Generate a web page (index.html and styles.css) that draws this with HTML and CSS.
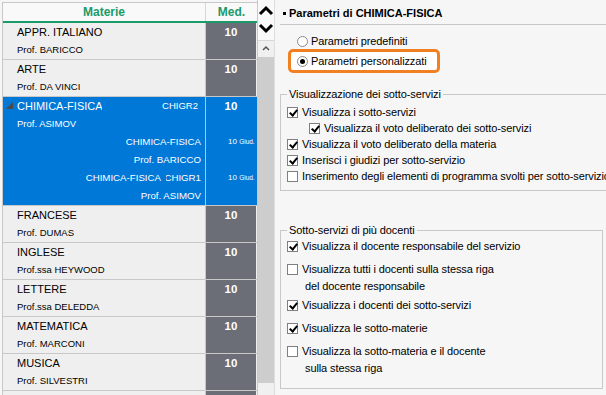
FILE: index.html
```html
<!DOCTYPE html>
<html lang="it">
<head>
    <meta charset="UTF-8">
    <meta name="viewport" content="width=device-width, initial-scale=1.0">
    <title>Parametri di CHIMICA-FISICA</title>
    <link rel="stylesheet" href="styles.css">
</head>
<body>

<div class="app">

    <!-- Elenco delle materie -->
    <div class="list">
        <div class="list-head">
            <div class="head-name">Materie</div>
            <div class="head-med">Med.</div>
        </div>

        <div class="row">
            <div class="cell-name">
                <div class="subj">APPR. ITALIANO</div>
                <div class="prof">Prof. BARICCO</div>
            </div>
            <div class="cell-med"><div class="grade">10</div></div>
        </div>

        <div class="row">
            <div class="cell-name">
                <div class="subj">ARTE</div>
                <div class="prof">Prof. DA VINCI</div>
            </div>
            <div class="cell-med"><div class="grade">10</div></div>
        </div>

        <div class="row selected">
            <div class="cell-name">
                <div class="subj subj-main">
                    <svg class="tri" width="7" height="7" viewBox="0 0 7 7"><polygon points="7,0 7,7 0,7" fill="#4a4a4a"/></svg>
                    <span class="subj-clip">CHIMICA-FISICA</span>
                    <span class="code">CHIGR2</span>
                </div>
                <div class="prof">Prof. ASIMOV</div>
                <div class="sub">CHIMICA-FISICA</div>
                <div class="sub">Prof. BARICCO</div>
                <div class="sub">CHIMICA-FISICA <span class="code-clip"><span>CHIGR1</span></span></div>
                <div class="sub">Prof. ASIMOV</div>
            </div>
            <div class="cell-med">
                <div class="grade">10</div>
                <div class="grade"></div>
                <div class="grade-sub">10 <small>Giud.</small></div>
                <div class="grade"></div>
                <div class="grade-sub">10 <small>Giud.</small></div>
                <div class="grade"></div>
            </div>
        </div>

        <div class="row">
            <div class="cell-name">
                <div class="subj">FRANCESE</div>
                <div class="prof">Prof. DUMAS</div>
            </div>
            <div class="cell-med"><div class="grade">10</div></div>
        </div>

        <div class="row">
            <div class="cell-name">
                <div class="subj">INGLESE</div>
                <div class="prof">Prof.ssa HEYWOOD</div>
            </div>
            <div class="cell-med"><div class="grade">10</div></div>
        </div>

        <div class="row">
            <div class="cell-name">
                <div class="subj">LETTERE</div>
                <div class="prof">Prof.ssa DELEDDA</div>
            </div>
            <div class="cell-med"><div class="grade">10</div></div>
        </div>

        <div class="row">
            <div class="cell-name">
                <div class="subj">MATEMATICA</div>
                <div class="prof">Prof. MARCONI</div>
            </div>
            <div class="cell-med"><div class="grade">10</div></div>
        </div>

        <div class="row">
            <div class="cell-name">
                <div class="subj">MUSICA</div>
                <div class="prof">Prof. SILVESTRI</div>
            </div>
            <div class="cell-med"><div class="grade">10</div></div>
        </div>

        <!-- riga successiva, appena visibile -->
        <div class="row">
            <div class="cell-name"></div>
            <div class="cell-med"></div>
        </div>
    </div>

    <!-- Barra di scorrimento -->
    <div class="scroll">
        <div class="scroll-arrows">
            <svg width="16" height="19" viewBox="0 0 16 19"><polyline points="2,14 8,8 14,14" fill="none" stroke="#000" stroke-width="3"/></svg>
            <svg width="16" height="19" viewBox="0 0 16 19"><polyline points="2,6 8,12 14,6" fill="none" stroke="#000" stroke-width="3"/></svg>
        </div>
        <div class="scroll-btn">
            <svg width="16" height="16" viewBox="0 0 16 16"><polyline points="5,9 8,6 11,9" fill="none" stroke="#555" stroke-width="1.5"/></svg>
        </div>
        <div class="scroll-thumb"></div>
        <div class="scroll-track"></div>
    </div>

    <!-- Parametri -->
    <div class="panel">
        <div class="panel-title"><span class="bullet"></span>Parametri di CHIMICA-FISICA</div>

        <div class="choices">
            <div class="radio-row"><span class="radio"></span>Parametri predefiniti</div>
            <div class="radio-row highlight"><span class="radio checked"></span>Parametri personalizzati</div>
        </div>

        <fieldset class="group group-one">
            <legend>Visualizzazione dei sotto-servizi</legend>
            <div class="check-row"><span class="check on"></span>Visualizza i sotto-servizi</div>
            <div class="check-row indent"><span class="check on"></span>Visualizza il voto deliberato dei sotto-servizi</div>
            <div class="check-row"><span class="check on"></span>Visualizza il voto deliberato della materia</div>
            <div class="check-row"><span class="check on"></span>Inserisci i giudizi per sotto-servizio</div>
            <div class="check-row"><span class="check"></span>Inserimento degli elementi di programma svolti per sotto-servizio</div>
        </fieldset>

        <fieldset class="group group-two">
            <legend>Sotto-servizi di più docenti</legend>
            <div class="check-row"><span class="check on"></span>Visualizza il docente responsabile del servizio</div>
            <div class="check-row two-lines"><span class="check"></span><div>Visualizza tutti i docenti sulla stessa riga<div class="cont">del docente responsabile</div></div></div>
            <div class="check-row"><span class="check on"></span>Visualizza i docenti dei sotto-servizi</div>
            <div class="check-row"><span class="check on"></span>Visualizza le sotto-materie</div>
            <div class="check-row two-lines"><span class="check"></span><div>Visualizza la sotto-materia e il docente<div class="cont">sulla stessa riga</div></div></div>
        </fieldset>
    </div>

</div>

</body>
</html>
```

FILE: styles.css
```css
body {
    font-family: "Liberation Sans", Arial, sans-serif;
    background-color: #f6f6f6;
    margin: 0;
    color: #000;
}

.app {
    display: flex;
    height: 395px;
    padding: 2px 0 0 2px;
    box-sizing: border-box;
    overflow: hidden;
}

/* Elenco materie */
.list {
    width: 254px;
    border-left: 1px solid #c8c8c8;
    border-top: 1px solid #c8c8c8;
    flex-shrink: 0;
}

.list-head {
    display: flex;
    height: 18px;
    background-color: #f9f9f9;
    border-bottom: 2px solid #1b9a6a;
    color: #1b9a6a;
    font-weight: bold;
    font-size: 12px;
    line-height: 18px;
    text-align: center;
}

.head-name {
    width: 202px;
}

.head-med {
    width: 51px;
    border-left: 1px solid #d6d6d6;
}

.row {
    display: flex;
    height: 36px;
    border-bottom: 1px solid #c8c8c8;
    background-color: #efefef;
}

.cell-name {
    width: 202px;
    padding: 0 4px 0 14px;
    box-sizing: border-box;
    overflow: hidden;
}

.subj {
    font-size: 11px;
    line-height: 18px;
    white-space: nowrap;
}

.prof {
    font-size: 9.5px;
    line-height: 18px;
    white-space: nowrap;
}

.cell-med {
    width: 50px;
    background-color: #6b6e76;
    border-left: 1px solid #c8c8c8;
    overflow: hidden;
    color: white;
}

.grade {
    height: 18px;
    line-height: 18px;
    text-align: center;
    font-weight: bold;
    font-size: 11.5px;
}

.grade-sub {
    height: 18px;
    line-height: 18px;
    padding-left: 22px;
    font-size: 8px;
    white-space: nowrap;
}

.grade-sub small {
    font-size: 6.5px;
}

/* Riga selezionata */
.row.selected {
    height: 108px;
    background-color: #0078d7;
    color: white;
}

.row.selected .cell-med {
    background-color: #0078d7;
    border-left-color: #a9c9ea;
}

.subj-main {
    display: flex;
    align-items: center;
    position: relative;
}

.tri {
    position: absolute;
    left: -11px;
    top: 5px;
}

.subj-clip {
    width: 85px;
    overflow: hidden;
}

.code {
    margin-left: auto;
    margin-right: 3px;
    font-size: 9.5px;
}

.sub {
    display: flex;
    justify-content: flex-end;
    font-size: 9.7px;
    line-height: 18px;
    white-space: nowrap;
}

.code-clip {
    display: flex;
    justify-content: flex-end;
    width: 35px;
    margin-left: 5px;
    overflow: hidden;
}

/* Barra di scorrimento */
.scroll {
    width: 16px;
    border-left: 1px solid #c8c8c8;
    border-right: 1px solid #dedede;
    display: flex;
    flex-direction: column;
    flex-shrink: 0;
    margin-top: -2px;
    margin-right: 5px;
    background-color: #f0f0f0;
}

.scroll-arrows {
    height: 40px;
    background-color: #f9f9f9;
    border-bottom: 1px solid #d8d8d8;
}

.scroll-arrows svg {
    display: block;
}

.scroll-btn {
    height: 16px;
    background-color: #f0f0f0;
}

.scroll-btn svg {
    display: block;
}

.scroll-thumb {
    height: 326px;
    background-color: #cdcdcd;
}

.scroll-track {
    flex: 1;
}

/* Pannello dei parametri */
.panel {
    flex: 1;
    display: flex;
    flex-direction: column;
    font-size: 11px;
    letter-spacing: -0.1px;
    min-width: 0;
}

.panel-title {
    display: flex;
    align-items: center;
    height: 22px;
    border-bottom: 1px solid #c8c8c8;
    font-weight: bold;
    letter-spacing: 0;
    padding-left: 3px;
}

.bullet {
    width: 3px;
    height: 3px;
    background-color: #000;
    margin-right: 3px;
}

.choices {
    display: flex;
    flex-direction: column;
    align-items: flex-start;
    margin-top: 7px;
}

.radio-row {
    display: flex;
    align-items: center;
    height: 18px;
    margin-left: 17px;
}

.radio-row.highlight {
    margin-top: -1px;
    margin-left: 8px;
    padding: 0 10px 0 6px;
    border: 3px solid #f08022;
    border-radius: 5px;
    background-color: white;
}

.radio {
    width: 9px;
    height: 9px;
    border: 1px solid #8a8a8a;
    border-radius: 50%;
    background-color: white;
    margin-right: 3px;
    display: flex;
    align-items: center;
    justify-content: center;
}

.radio.checked::after {
    content: "";
    width: 5px;
    height: 5px;
    border-radius: 50%;
    background-color: #000;
}

.group {
    margin: 14px 3px 0 0;
    padding: 3px 0 6px 6px;
    border: 1px solid #c8c8c8;
    overflow: hidden;
}

.group legend {
    padding: 0 2px;
    line-height: 14px;
}

.group-two {
    margin-top: 32px;
    padding: 1px 0 15px 6px;
    display: flex;
    flex-direction: column;
    gap: 6px;
}

.check-row {
    display: flex;
    align-items: center;
    line-height: 16px;
    white-space: nowrap;
}

.group-two .check-row {
    line-height: 17px;
    align-items: flex-start;
}

.group-two .check-row .check {
    margin-top: 3px;
}

.group-two .two-lines {
    margin-bottom: -4px;
}

.check-row.indent {
    margin-left: 22px;
}

.cont {
    padding-left: 3px;
}

.check {
    width: 11px;
    height: 11px;
    box-sizing: border-box;
    border: 1px solid #7f7f7f;
    background-color: white;
    margin-right: 4px;
    flex-shrink: 0;
    position: relative;
}

.check.on::after {
    content: "";
    position: absolute;
    left: 3px;
    top: 0px;
    width: 3px;
    height: 6px;
    border-right: 2px solid #000;
    border-bottom: 2px solid #000;
    transform: rotate(40deg);
}
```
